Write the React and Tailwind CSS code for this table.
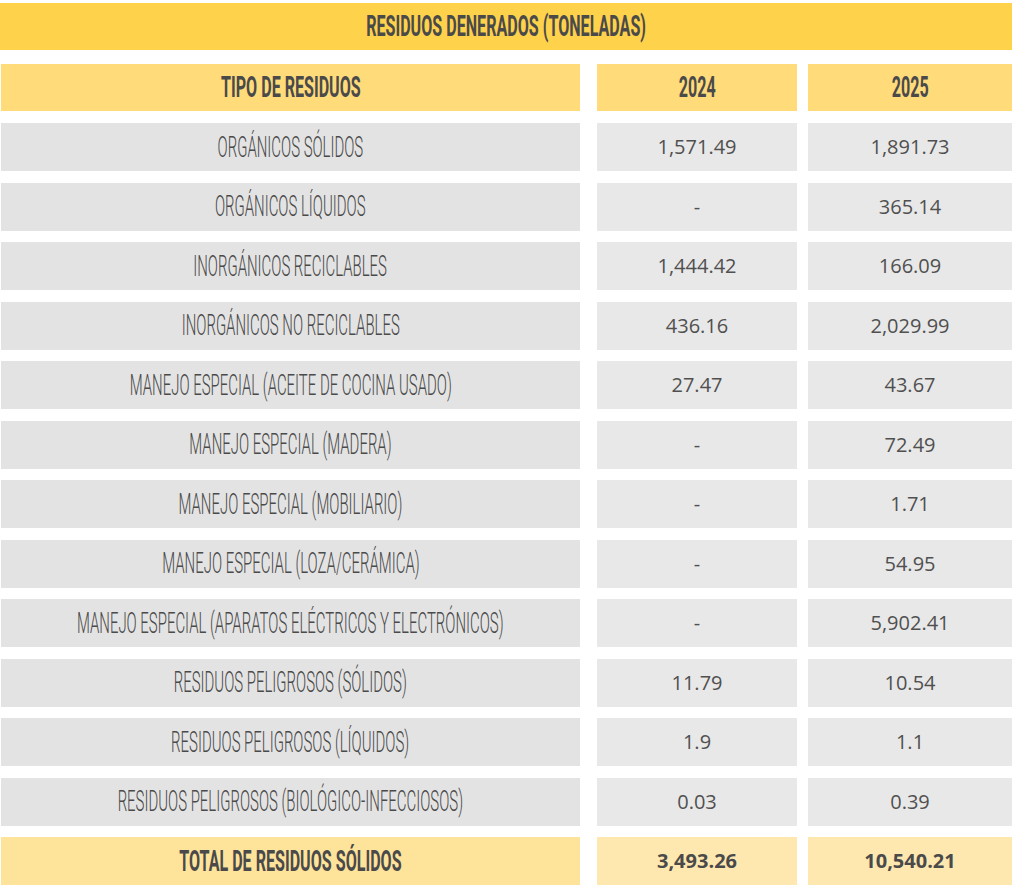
import React from "react";

const rows = [
  ["ORGÁNICOS SÓLIDOS", "1,571.49", "1,891.73"],
  ["ORGÁNICOS LÍQUIDOS", "-", "365.14"],
  ["INORGÁNICOS RECICLABLES", "1,444.42", "166.09"],
  ["INORGÁNICOS NO RECICLABLES", "436.16", "2,029.99"],
  ["MANEJO ESPECIAL (ACEITE DE COCINA USADO)", "27.47", "43.67"],
  ["MANEJO ESPECIAL (MADERA)", "-", "72.49"],
  ["MANEJO ESPECIAL (MOBILIARIO)", "-", "1.71"],
  ["MANEJO ESPECIAL (LOZA/CERÁMICA)", "-", "54.95"],
  ["MANEJO ESPECIAL (APARATOS ELÉCTRICOS Y ELECTRÓNICOS)", "-", "5,902.41"],
  ["RESIDUOS PELIGROSOS (SÓLIDOS)", "11.79", "10.54"],
  ["RESIDUOS PELIGROSOS (LÍQUIDOS)", "1.9", "1.1"],
  ["RESIDUOS PELIGROSOS (BIOLÓGICO-INFECCIOSOS)", "0.03", "0.39"],
];

const cond = { fontFamily: "Roboto, 'Liberation Sans', sans-serif" };
const num = { fontFamily: "'Open Sans', Lato, sans-serif" };

function Label({ children, bold }) {
  return bold ? (
    <span
      style={cond}
      className="inline-block whitespace-nowrap origin-center scale-x-[0.555] text-[29px] leading-none text-[#4a4a4a] font-bold"
    >
      {children}
    </span>
  ) : (
    <span
      style={cond}
      className="inline-block whitespace-nowrap origin-center scale-x-[0.515] text-[29px] leading-none text-[#4a4a4a] font-light"
    >
      {children}
    </span>
  );
}

export default function App() {
  return (
    <div className="w-[1013px] h-[886px] bg-white pt-[3px] overflow-hidden">
      <div className="h-[47px] w-[1012px] bg-[#ffd24c] flex items-center justify-center">
        <Label bold>RESIDUOS DENERADOS (TONELADAS)</Label>
      </div>
      <div className="mt-[14px] pl-[1px] flex flex-col gap-[11.5px]">
        <div className="flex h-[47px]">
          <div className="w-[579px] bg-[#ffdb7a] flex items-center justify-center">
            <Label bold>TIPO DE RESIDUOS</Label>
          </div>
          <div className="ml-[17px] w-[200px] bg-[#ffdb7a] flex items-center justify-center">
            <Label bold>2024</Label>
          </div>
          <div className="ml-[11px] w-[204px] bg-[#ffdb7a] flex items-center justify-center">
            <Label bold>2025</Label>
          </div>
        </div>
        <div className="flex flex-col gap-[11.5px] mt-[0.5px]">
          {rows.map((r, i) => (
            <div key={i} className="flex h-[48px]">
              <div className="w-[579px] bg-[#e3e3e3] flex items-center justify-center">
                <Label>{r[0]}</Label>
              </div>
              <div
                style={num}
                className="ml-[17px] w-[200px] bg-[#e8e8e8] flex items-center justify-center text-[20px] font-normal text-[#505050]"
              >
                {r[1]}
              </div>
              <div
                style={num}
                className="ml-[11px] w-[204px] bg-[#e8e8e8] flex items-center justify-center text-[20px] font-normal text-[#505050]"
              >
                {r[2]}
              </div>
            </div>
          ))}
          <div className="flex h-[48px]">
            <div className="w-[579px] bg-[#fee39b] flex items-center justify-center">
              <Label bold>TOTAL DE RESIDUOS SÓLIDOS</Label>
            </div>
            <div
              style={num}
              className="ml-[17px] w-[200px] bg-[#ffe8b0] flex items-center justify-center text-[20px] font-bold text-[#4a4a4a]"
            >
              3,493.26
            </div>
            <div
              style={num}
              className="ml-[11px] w-[204px] bg-[#ffe8b0] flex items-center justify-center text-[20px] font-bold text-[#4a4a4a]"
            >
              10,540.21
            </div>
          </div>
        </div>
      </div>
    </div>
  );
}
